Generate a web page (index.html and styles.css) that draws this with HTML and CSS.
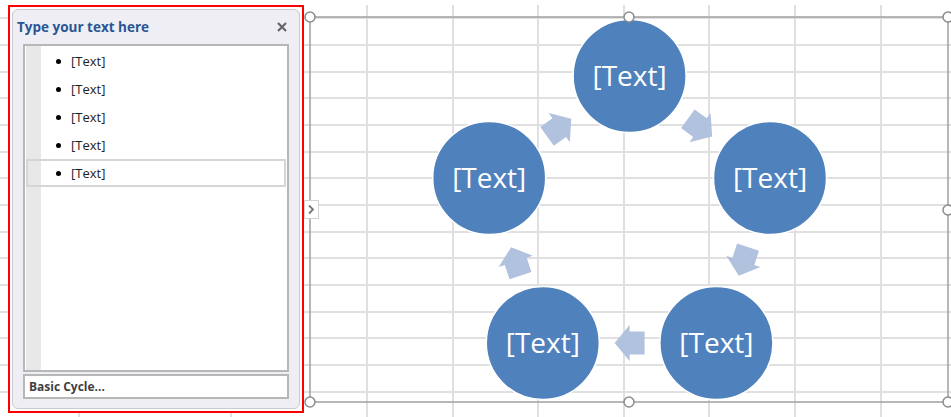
FILE: index.html
```html
<!DOCTYPE html>
<html>
<head>
  <title>SmartArt - Basic Cycle</title>
  <link rel="stylesheet" href="styles.css">
</head>
<body>

<div class="sheet">
  <!-- worksheet gridlines behind everything -->
  <svg class="grid" width="951" height="417" viewBox="0 0 951 417">
    <g stroke="#e0e0e0" stroke-width="2" shape-rendering="crispEdges">
      <line x1="0" y1="18" x2="951" y2="18"/>
      <line x1="0" y1="45" x2="951" y2="45"/>
      <line x1="0" y1="72" x2="951" y2="72"/>
      <line x1="0" y1="98" x2="951" y2="98"/>
      <line x1="0" y1="125" x2="951" y2="125"/>
      <line x1="0" y1="152" x2="951" y2="152"/>
      <line x1="0" y1="178" x2="951" y2="178"/>
      <line x1="0" y1="205" x2="951" y2="205"/>
      <line x1="0" y1="232" x2="951" y2="232"/>
      <line x1="0" y1="258" x2="951" y2="258"/>
      <line x1="0" y1="285" x2="951" y2="285"/>
      <line x1="0" y1="312" x2="951" y2="312"/>
      <line x1="0" y1="338" x2="951" y2="338"/>
      <line x1="0" y1="365" x2="951" y2="365"/>
      <line x1="0" y1="392" x2="951" y2="392"/>
      <line x1="79" y1="5" x2="79" y2="417"/>
      <line x1="231" y1="5" x2="231" y2="417"/>
      <line x1="367" y1="5" x2="367" y2="417"/>
      <line x1="453" y1="5" x2="453" y2="417"/>
      <line x1="538" y1="5" x2="538" y2="417"/>
      <line x1="624" y1="5" x2="624" y2="417"/>
      <line x1="709" y1="5" x2="709" y2="417"/>
      <line x1="795" y1="5" x2="795" y2="417"/>
      <line x1="881" y1="5" x2="881" y2="417"/>
    </g>
  </svg>

  <aside class="pane">
    <div class="pane-box">
      <div class="pane-head">
        <span class="pane-title">Type your text here</span>
        <svg class="close" width="10" height="10" viewBox="0 0 10 10">
          <path d="M1 1 L9 9 M9 1 L1 9" stroke="#666" stroke-width="2.2"/>
        </svg>
      </div>
      <ul class="outline">
        <li class="row"><span class="dot"></span>[Text]</li>
        <li class="row"><span class="dot"></span>[Text]</li>
        <li class="row"><span class="dot"></span>[Text]</li>
        <li class="row"><span class="dot"></span>[Text]</li>
        <li class="row current"><span class="dot"></span>[Text]</li>
      </ul>
      <div class="layout-name">Basic Cycle...</div>
    </div>
  </aside>

  <!-- the diagram object, drawn in sheet coordinates -->
  <svg class="art" width="647" height="417" viewBox="304 0 647 417">
    <rect x="310" y="17" width="638" height="385" fill="none" stroke="#a6a6a6" stroke-width="1.6"/>

    <g fill="#b1c2de">
      <path transform="translate(700 127.6) rotate(36)" d="M-15 -11.5 H0 V-18 L15 0 L0 18 V11.5 H-15 Z"/>
      <path transform="translate(743.4 261.4) rotate(108)" d="M-15 -11.5 H0 V-18 L15 0 L0 18 V11.5 H-15 Z"/>
      <path transform="translate(629.6 343) rotate(180)" d="M-15 -11.5 H0 V-18 L15 0 L0 18 V11.5 H-15 Z"/>
      <path transform="translate(515.8 261.4) rotate(252)" d="M-15 -11.5 H0 V-18 L15 0 L0 18 V11.5 H-15 Z"/>
      <path transform="translate(559.2 127.6) rotate(324)" d="M-15 -11.5 H0 V-18 L15 0 L0 18 V11.5 H-15 Z"/>
    </g>

    <g fill="#4f81bd" stroke="#fff" stroke-width="1.5">
      <circle cx="629.6" cy="76" r="56.5"/>
      <circle cx="770" cy="178" r="56.5"/>
      <circle cx="716.4" cy="343" r="56.5"/>
      <circle cx="542.8" cy="343" r="56.5"/>
      <circle cx="489.2" cy="178" r="56.5"/>
    </g>
    <g class="node-text" fill="#fff" text-anchor="middle">
      <text x="629.6" y="86">[Text]</text>
      <text x="770" y="188">[Text]</text>
      <text x="716.4" y="353">[Text]</text>
      <text x="542.8" y="353">[Text]</text>
      <text x="489.2" y="188">[Text]</text>
    </g>

    <g fill="#fff" stroke="#8c8c8c" stroke-width="1.5">
      <circle cx="310" cy="17" r="5"/>
      <circle cx="629" cy="17" r="5"/>
      <circle cx="948" cy="17" r="5"/>
      <circle cx="948" cy="210" r="5"/>
      <circle cx="310" cy="402" r="5"/>
      <circle cx="629" cy="402" r="5"/>
      <circle cx="948" cy="402" r="5"/>
    </g>

    <rect x="304.5" y="200.5" width="14" height="18" fill="#fff" stroke="#d2d2d2"/>
    <path d="M309 205.5 L313 209.5 L309 213.5" fill="none" stroke="#777" stroke-width="1.8"/>
  </svg>
</div>

</body>
</html>
```

FILE: styles.css
```css
body {
  margin: 0;
  background: #fff;
  font-family: "Open Sans", "Noto Sans", sans-serif;
}
.sheet {
  position: relative;
  width: 951px;
  height: 417px;
  display: flex;
  align-items: flex-start;
  overflow: hidden;
}
.grid {
  position: absolute;
  left: 0;
  top: 0;
}
.pane {
  position: relative;
  flex: none;
  margin: 5px 0 0 8px;
  width: 296px;
  height: 408px;
  box-sizing: border-box;
  border: 2px solid #f00;
  padding: 2px;
  background: #fff;
}
.pane-box {
  height: 100%;
  box-sizing: border-box;
  border: 1px solid #c9c9cf;
  border-radius: 6px;
  background: #eeeef4;
  display: flex;
  flex-direction: column;
  padding: 0 10px 9px 10px;
}
.pane-head {
  height: 34px;
  flex: none;
  display: flex;
  align-items: center;
  justify-content: space-between;
  margin-left: -6px;
}
.pane-title {
  font-weight: 700;
  font-size: 13.5px;
  color: #2a5595;
}
.close {
  margin-right: 2px;
}
.outline {
  flex: 1;
  margin: 0;
  padding: 1px;
  list-style: none;
  border: 2px solid #b7b7b7;
  background: linear-gradient(to right, #fff 1px, #e8e8e8 1px, #e8e8e8 16px, #fff 16px);
}
.row {
  height: 28px;
  box-sizing: border-box;
  display: flex;
  align-items: center;
  padding-left: 30px;
  font-size: 13px;
  color: #1e1e1e;
}
.row.current {
  box-shadow: inset 0 0 0 2px #d5d5d5;
}
.dot {
  width: 5px;
  height: 5px;
  border-radius: 50%;
  background: #000;
  margin-right: 10px;
}
.layout-name {
  flex: none;
  margin-top: 2px;
  height: 25px;
  box-sizing: border-box;
  border: 2px solid #b7b7b7;
  background: #fff;
  font-size: 12px;
  font-weight: 700;
  color: #3f3f3f;
  padding-left: 4px;
  display: flex;
  align-items: center;
}
.art {
  position: relative;
  flex: none;
}
.node-text {
  font-family: "Open Sans", "Noto Sans", sans-serif;
  font-size: 28px;
}
```
